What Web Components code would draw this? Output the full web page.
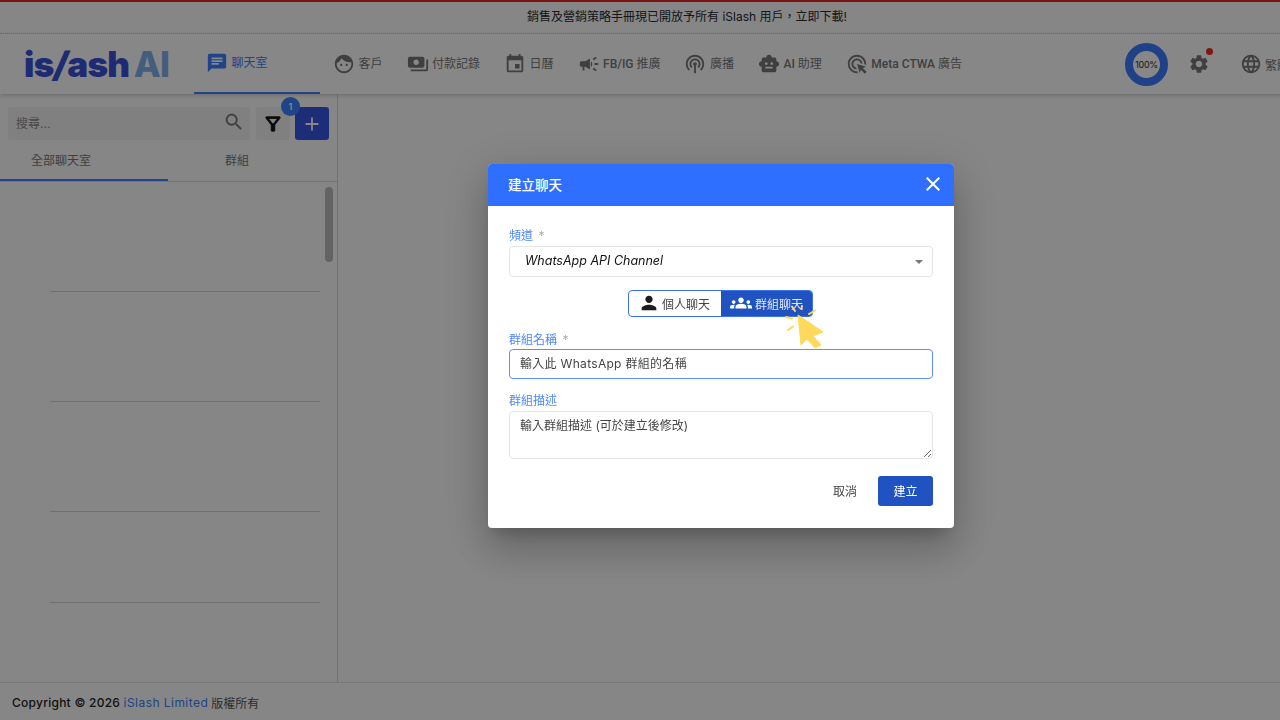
<!DOCTYPE html>
<html lang="zh-Hant">
<head>
<meta charset="utf-8">
<title>iSlash AI</title>
<style>
  html, body { margin: 0; height: 720px; overflow: hidden; background: #fff; }
  body { font-family: Inter, "Noto Sans CJK TC", sans-serif; font-size: 12px; color: #333; }
</style>
</head>
<body>
<app-shell>
  <promo-bar>銷售及營銷策略手冊現已開放予所有 iSlash 用戶，立即下載!</promo-bar>
  <nav-bar>
    <nav-item icon="chat" active>聊天室</nav-item>
    <nav-item icon="face">客戶</nav-item>
    <nav-item icon="payments">付款記錄</nav-item>
    <nav-item icon="event">日曆</nav-item>
    <nav-item icon="campaign"><b>FB/IG</b> 推廣</nav-item>
    <nav-item icon="podcasts">廣播</nav-item>
    <nav-item icon="toy"><b>AI</b> 助理</nav-item>
    <nav-item icon="ads"><b>Meta CTWA</b> 廣告</nav-item>
  </nav-bar>
  <chat-sidebar></chat-sidebar>
  <site-footer></site-footer>
</app-shell>
<create-chat-dialog></create-chat-dialog>

<script>
'use strict';

const ICONS = {
  chat: 'M20 2H4c-1.1 0-1.99.9-1.99 2L2 22l4-4h14c1.1 0 2-.9 2-2V4c0-1.1-.9-2-2-2zM6 9h12v2H6V9zm8 5H6v-2h8v2zm4-6H6V6h12v2z',
  face: 'M9 11.75c-.69 0-1.25.56-1.25 1.25s.56 1.25 1.25 1.25 1.25-.56 1.25-1.25-.56-1.25-1.25-1.25zm6 0c-.69 0-1.25.56-1.25 1.25s.56 1.25 1.25 1.25 1.25-.56 1.25-1.25-.56-1.25-1.25-1.25zM12 2C6.48 2 2 6.48 2 12s4.48 10 10 10 10-4.48 10-10S17.52 2 12 2zm0 18c-4.41 0-8-3.59-8-8 0-.29.02-.58.05-.86 2.36-1.05 4.23-2.98 5.21-5.37C11.07 8.33 14.05 10 17.42 10c.78 0 1.53-.09 2.25-.26.21.71.33 1.47.33 2.26 0 4.41-3.59 8-8 8z',
  payments: 'M19 14V6c0-1.1-.9-2-2-2H3c-1.1 0-2 .9-2 2v8c0 1.1.9 2 2 2h14c1.1 0 2-.9 2-2zm-9-1c-1.66 0-3-1.34-3-3s1.34-3 3-3 3 1.34 3 3-1.34 3-3 3zm13-6v11c0 1.1-.9 2-2 2H4v-2h17V7h2z',
  event: 'M17 12h-5v5h5v-5zM16 1v2H8V1H6v2H5c-1.11 0-1.99.9-1.99 2L3 19c0 1.1.89 2 2 2h14c1.1 0 2-.9 2-2V5c0-1.1-.9-2-2-2h-1V1h-2zm3 18H5V8h14v11z',
  campaign: 'M18 11v2h4v-2h-4zm-2 6.61c.96.71 2.21 1.65 3.2 2.39.4-.53.8-1.07 1.2-1.6-.99-.74-2.24-1.68-3.2-2.4-.4.54-.8 1.08-1.2 1.61zM20.4 5.6c-.4-.53-.8-1.07-1.2-1.6-.99.74-2.24 1.68-3.2 2.4.4.53.8 1.07 1.2 1.6.96-.72 2.21-1.65 3.2-2.4zM4 9c-1.1 0-2 .9-2 2v2c0 1.1.9 2 2 2h1v4h2v-4h1l5 3V6L8 9H4zm11.5 3c0-1.33-.58-2.53-1.5-3.35v6.69c.92-.81 1.5-2.01 1.5-3.34z',
  podcasts: 'M14 12c0 .74-.4 1.38-1 1.72V22h-2v-8.28c-.6-.35-1-.98-1-1.72 0-1.1.9-2 2-2s2 .9 2 2zm-2-6c-3.31 0-6 2.69-6 6 0 1.74.75 3.31 1.94 4.4l1.42-1.42C8.53 14.25 8 13.19 8 12c0-2.21 1.79-4 4-4s4 1.79 4 4c0 1.19-.53 2.25-1.36 2.98l1.42 1.42C17.25 15.31 18 13.74 18 12c0-3.31-2.69-6-6-6zm0-4C6.48 2 2 6.48 2 12c0 2.85 1.2 5.41 3.11 7.24l1.42-1.42C4.98 16.36 4 14.29 4 12c0-4.41 3.59-8 8-8s8 3.59 8 8c0 2.29-.98 4.36-2.53 5.82l1.42 1.42C20.8 17.41 22 14.85 22 12c0-5.52-4.48-10-10-10z',
  toy: 'M20 9V7c0-1.1-.9-2-2-2h-3c0-1.66-1.34-3-3-3S9 3.34 9 5H6c-1.1 0-2 .9-2 2v2c-1.66 0-3 1.34-3 3s1.34 3 3 3v4c0 1.1.9 2 2 2h12c1.1 0 2-.9 2-2v-4c1.66 0 3-1.34 3-3s-1.34-3-3-3zM7.5 11.5c0-.83.67-1.5 1.5-1.5s1.5.67 1.5 1.5S9.83 13 9 13s-1.5-.67-1.5-1.5zM16 17H8v-2h8v2zm-1-4c-.83 0-1.5-.67-1.5-1.5S14.17 10 15 10s1.5.67 1.5 1.5S15.83 13 15 13z',
  ads: 'M11.71 17.99C8.53 17.84 6 15.22 6 12c0-3.31 2.69-6 6-6 3.22 0 5.84 2.53 5.99 5.71l-2.1-.63C15.48 9.31 13.89 8 12 8c-2.21 0-4 1.79-4 4 0 1.89 1.31 3.48 3.08 3.89l.63 2.1zM22 12c0 .3-.01.6-.04.9l-1.97-.59c.01-.1.01-.21.01-.31 0-4.42-3.58-8-8-8s-8 3.58-8 8 3.58 8 8 8c.1 0 .21 0 .31-.01l.59 1.97c-.3.03-.6.04-.9.04-5.52 0-10-4.48-10-10S6.48 2 12 2s10 4.48 10 10zm-3.77 4.26L22 15l-10-3 3 10 1.26-3.77 4.27 4.27 1.98-1.98-4.28-4.26z',
  settings: 'M19.14 12.94c.04-.3.06-.61.06-.94 0-.32-.02-.64-.07-.94l2.03-1.58c.18-.14.23-.41.12-.61l-1.92-3.32c-.12-.22-.37-.29-.59-.22l-2.39.96c-.5-.38-1.03-.7-1.62-.94l-.36-2.54c-.04-.24-.24-.41-.48-.41h-3.84c-.24 0-.43.17-.47.41l-.36 2.54c-.59.24-1.13.57-1.62.94l-2.39-.96c-.22-.08-.47 0-.59.22L2.74 8.87c-.12.21-.08.47.12.61l2.03 1.58c-.05.3-.09.63-.09.94s.02.64.07.94l-2.03 1.58c-.18.14-.23.41-.12.61l1.92 3.32c.12.22.37.29.59.22l2.39-.96c.5.38 1.03.7 1.62.94l.36 2.54c.05.24.24.41.48.41h3.84c.24 0 .44-.17.47-.41l.36-2.54c.59-.24 1.13-.56 1.62-.94l2.39.96c.22.08.47 0 .59-.22l1.92-3.32c.12-.22.07-.47-.12-.61l-2.01-1.58zM12 15.6c-1.98 0-3.6-1.62-3.6-3.6s1.62-3.6 3.6-3.6 3.6 1.62 3.6 3.6-1.62 3.6-3.6 3.6z',
  language: 'M11.99 2C6.47 2 2 6.48 2 12s4.47 10 9.99 10C17.52 22 22 17.52 22 12S17.52 2 11.99 2zm6.93 6h-2.95c-.32-1.25-.78-2.45-1.38-3.56 1.84.63 3.37 1.91 4.33 3.56zM12 4.04c.83 1.2 1.48 2.53 1.91 3.96h-3.82c.43-1.43 1.08-2.76 1.91-3.96zM4.26 14C4.1 13.36 4 12.69 4 12s.1-1.36.26-2h3.38c-.08.66-.14 1.32-.14 2 0 .68.06 1.34.14 2H4.26zm.82 2h2.95c.32 1.25.78 2.45 1.38 3.56-1.84-.63-3.37-1.9-4.33-3.56zm2.95-8H5.08c.96-1.66 2.49-2.93 4.33-3.56C8.81 5.55 8.35 6.75 8.03 8zM12 19.96c-.83-1.2-1.48-2.53-1.91-3.96h3.82c-.43 1.43-1.08 2.76-1.91 3.96zM14.34 14H9.66c-.09-.66-.16-1.32-.16-2 0-.68.07-1.35.16-2h4.68c.09.65.16 1.32.16 2 0 .68-.07 1.34-.16 2zm.25 5.56c.6-1.11 1.06-2.31 1.38-3.56h2.95c-.96 1.65-2.49 2.93-4.33 3.56zM16.36 14c.08-.66.14-1.32.14-2 0-.68-.06-1.34-.14-2h3.38c.16.64.26 1.31.26 2s-.1 1.36-.26 2h-3.38z',
  search: 'M15.5 14h-.79l-.28-.27C15.41 12.59 16 11.11 16 9.5 16 5.91 13.09 3 9.5 3S3 5.91 3 9.5 5.91 16 9.5 16c1.61 0 3.09-.59 4.23-1.57l.27.28v.79l5 4.99L20.49 19l-4.99-5zm-6 0C7.01 14 5 11.99 5 9.5S7.01 5 9.5 5 14 7.01 14 9.5 11.99 14 9.5 14z',
  filter: 'M7 6h10l-5.01 6.3L7 6zm-2.75-.39C6.27 8.2 10 13 10 13v6c0 .55.45 1 1 1h2c.55 0 1-.45 1-1v-6s3.72-4.8 5.74-7.39c.51-.66.04-1.61-.79-1.61H5.04c-.83 0-1.3.95-.79 1.61z',
  add: 'M19 13h-6v6h-2v-6H5v-2h6V5h2v6h6v2z',
  person: 'M12 12c2.21 0 4-1.79 4-4s-1.79-4-4-4-4 1.79-4 4 1.79 4 4 4zm0 2c-2.67 0-8 1.34-8 4v2h16v-2c0-2.66-5.33-4-8-4z',
  groups: 'M12 12.75c1.63 0 3.07.39 4.24.9 1.08.48 1.76 1.56 1.76 2.73V18H6v-1.61c0-1.18.68-2.26 1.76-2.73 1.17-.52 2.61-.91 4.24-.91zM4 13c1.1 0 2-.9 2-2s-.9-2-2-2-2 .9-2 2 .9 2 2 2zm1.13 1.1C4.76 14.04 4.39 14 4 14c-.99 0-1.93.21-2.78.58C.48 14.9 0 15.62 0 16.43V18h4.5v-1.61c0-.83.23-1.61.63-2.29zM20 13c1.1 0 2-.9 2-2s-.9-2-2-2-2 .9-2 2 .9 2 2 2zm4 3.43c0-.81-.48-1.53-1.22-1.85-.85-.37-1.79-.58-2.78-.58-.39 0-.76.04-1.13.1.4.68.63 1.46.63 2.29V18H24v-1.57zM12 6c1.66 0 3 1.34 3 3s-1.34 3-3 3-3-1.34-3-3 1.34-3 3-3z',
  close: 'M19 6.41 17.59 5 12 10.59 6.41 5 5 6.41 10.59 12 5 17.59 6.41 19 12 13.41 17.59 19 19 17.59 13.41 12z'
};

const icon = (name, size, fill = 'currentColor') =>
  `<svg width="${size}" height="${size}" viewBox="0 0 24 24" fill="${fill}" style="display:block;flex:none"><path d="${ICONS[name]}"/></svg>`;

// small helper so each element only has to hand over its markup
class ShadowElement extends HTMLElement {
  constructor(html) {
    super();
    this.attachShadow({mode: 'open'}).innerHTML = html;
  }
}

customElements.define('app-shell', class extends ShadowElement {
  constructor() {
    super(`<style>
      :host { display: flex; flex-direction: column; width: 1442px; height: 720px; background: #fdfdfd; }
    </style><slot></slot>`);
  }
});

customElements.define('promo-bar', class extends ShadowElement {
  constructor() {
    super(`<style>
      :host {
        display: flex; justify-content: center; align-items: center;
        box-sizing: border-box; height: 34px; padding: 0 68px 4px 0;
        border-top: 2px solid #e8261f; border-bottom: 1px dotted #d0d0d0;
        color: #2a2a2a; font-size: 12px; background: #fdfdfd;
      }
    </style><slot></slot>`);
  }
});

customElements.define('nav-item', class extends ShadowElement {
  constructor() {
    super(`<style>
      :host {
        display: flex; align-items: center; gap: 3.500px; height: 60px; box-sizing: border-box;
        color: #777; font: 400 12px Roboto, "Noto Sans CJK TC", sans-serif;
      }
      :host([active]) {
        width: 126px; padding-left: 12px; margin-right: -11px;
        color: #3c80ff; border-bottom: 2px solid #3c80ff;
      }
      .t { white-space: pre; margin-bottom: 3px; }
      ::slotted(b) { font-weight: 500; }
    </style><span id="i"></span><span class="t"><slot></slot></span>`);
  }
  connectedCallback() {
    const i = this.shadowRoot.querySelector('#i');
    i.innerHTML = icon(this.getAttribute('icon'), 22);
  }
});

customElements.define('nav-bar', class extends ShadowElement {
  constructor() {
    super(`<style>
      :host {
        display: flex; align-items: center; gap: 24px; flex: none; position: relative; z-index: 1;
        height: 60px; padding-left: 24px; background: #fff;
        box-shadow: 0 1px 4px rgba(0,0,0,.22);
      }
      .logo {
        width: 146px; white-space: nowrap; font: 900 35px/60px Inter, sans-serif;
        letter-spacing: -.7px; color: #3a50d8;
      }
      .logo b { font-style: italic; font-weight: 900; }
      .logo i { font-style: normal; font-weight: 800; color: #80b0f0; margin-left: -2px; }
      .right { display: flex; align-items: center; margin-left: 139px; color: #777; }
      .ring {
        box-sizing: border-box; width: 43px; height: 43px; border-radius: 50%;
        border: 8px solid #3a7cff; display: flex; align-items: center; justify-content: center;
        color: #333; font-size: 9px; letter-spacing: -.3px;
      }
      .gear { position: relative; margin-left: 20px; }
      .dot { position: absolute; right: -3px; top: -5px; width: 7px; height: 7px; border-radius: 50%; background: #f02a20; }
      .lang { display: flex; align-items: center; gap: 3px; margin-left: 30px; font-size: 12px; }
    </style>
    <div class="logo">is<b>/</b>ash <i>AI</i></div>
    <slot></slot>
    <div class="right">
      <div class="ring">100%</div>
      <div class="gear">${icon('settings', 22)}<span class="dot"></span></div>
      <div class="lang">${icon('language', 22)}繁體中文</div>
    </div>`);
  }
});

customElements.define('chat-sidebar', class extends ShadowElement {
  constructor() {
    super(`<style>
      :host {
        display: flex; flex-direction: column; flex: 1; min-height: 0; box-sizing: border-box;
        width: 338px; border-right: 1px solid #d6d6d6; background: #fdfdfd; color: #777;
      }
      .tools { display: flex; height: 46px; padding: 13px 0 0 8px; box-sizing: border-box; flex: none; }
      .search {
        box-sizing: border-box; width: 242px; height: 33px; background: #f2f2f2; border-radius: 3px;
        display: flex; align-items: center; justify-content: space-between; padding: 0 5px 3px 8px; color: #8a8a8a;
      }
      .search svg { color: #777; }
      .filter {
        position: relative; width: 34px; height: 33px; margin-left: 6px; background: #f2f2f2; border-radius: 3px;
        display: flex; align-items: center; justify-content: center; color: #111;
      }
      .filter svg path { stroke: #111; stroke-width: .8; }
      .badge {
        position: absolute; left: 25px; top: -10px; width: 19px; height: 19px; border-radius: 50%;
        background: #3c80ff; color: #fff; font-size: 9px; font-weight: 600;
        display: flex; align-items: center; justify-content: center; z-index: 1;
      }
      .add {
        width: 34px; height: 33px; margin-left: 5px; border-radius: 3px; background: #3a55e0; color: #fff;
        display: flex; align-items: center; justify-content: center;
      }
      .tabs { display: flex; height: 41px; flex: none; border-bottom: 1px solid #dcdcdc; box-sizing: content-box; }
      .tab { box-sizing: border-box; height: 41px; line-height: 41px; font-size: 12px; color: #777; }
      .tab.on { width: 168px; padding-left: 31px; border-bottom: 2px solid #3c80ff; }
      .tab.off { padding-left: 57px; }
      .scroll { display: flex; flex: 1; min-height: 0; }
      .rows { flex: 1; margin-left: 50px; }
      .row { border-bottom: 1px solid #d2d2d2; box-sizing: border-box; }
      .thumb { width: 8px; height: 75px; margin: 5px 4px 0 5px; border-radius: 4px; background: #bcbcbc; flex: none; }
    </style>
    <div class="tools">
      <div class="search">搜尋...${icon('search', 22)}</div>
      <div class="filter"><span class="badge">1</span>${icon('filter', 22)}</div>
      <div class="add">${icon('add', 22)}</div>
    </div>
    <div class="tabs">
      <div class="tab on">全部聊天室</div>
      <div class="tab off">群組</div>
    </div>
    <div class="scroll">
      <div class="rows">
        <div class="row" style="height:110px"></div>
        <div class="row" style="height:110px"></div>
        <div class="row" style="height:110px"></div>
        <div class="row" style="height:91px"></div>
      </div>
      <div class="thumb"></div>
    </div>`);
  }
});

customElements.define('site-footer', class extends ShadowElement {
  constructor() {
    super(`<style>
      :host {
        display: flex; align-items: center; flex: none; height: 38px; box-sizing: border-box;
        padding: 2px 0 0 12px; border-top: 1px solid #e2e2e2; background: #fdfdfd;
        font-size: 12px; font-weight: 500; color: #222; letter-spacing: .25px; white-space: pre;
      }
      a { color: #3c80ff; font-weight: 400; letter-spacing: .45px; }
      span { font-weight: 400; color: #555; letter-spacing: 0; margin-left: 3px; }
    </style>Copyright © 2026 <a>iSlash Limited</a><span>版權所有</span>`);
  }
});

customElements.define('form-field', class extends ShadowElement {
  constructor() {
    super(`<style>
      :host { display: block; }
      .l { display: block; height: 16px; line-height: 16px; margin-bottom: 1px; font-size: 12px; color: #4c86ff; }
      .s { color: #aaa; margin-left: 2px; }
    </style><div class="l"><span id="t"></span><span class="s" id="m"></span></div><slot></slot>`);
  }
  connectedCallback() {
    this.shadowRoot.querySelector('#t').textContent = this.getAttribute('label');
    if (this.hasAttribute('required')) this.shadowRoot.querySelector('#m').textContent = ' *';
  }
});

customElements.define('chat-type-toggle', class extends ShadowElement {
  constructor() {
    super(`<style>
      :host {
        display: flex; position: relative; width: 185px; height: 27px; box-sizing: border-box;
        border: 1px solid #3f74e8; border-radius: 4px; font-size: 12px;
      }
      div { display: flex; align-items: center; box-sizing: border-box; padding-bottom: 1px; }
      .a { width: 92px; padding-left: 9px; gap: 2px; color: #444; }
      .b { flex: 1; padding-left: 9px; gap: 3px; background: #2052c2; color: #dfe8ff; border-radius: 0 3px 3px 0; }
      svg.cursor { position: absolute; left: 151px; top: 9px; overflow: visible; }
    </style>
    <div class="a">${icon('person', 22, '#1c1c1c')}個人聊天</div>
    <div class="b">${icon('groups', 22, '#fff')}群組聊天</div>
    <svg class="cursor" width="50" height="50" viewBox="780 299 50 50">
      <polygon points="798,314 823,331 813,335 821,344 815,347 807,338 801,344" fill="#ffd95a" stroke="#ffd95a" stroke-width="1" stroke-linejoin="round"/>
      <g stroke="#ffd95a" stroke-width="2" stroke-linecap="round" fill="none">
        <path d="M786 316l6 1.5M788 329l5-3.5M792 305.500l3 4.500M802 305l-.5 3M809 313l6-3.500"/>
      </g>
    </svg>`);
  }
});

customElements.define('create-chat-dialog', class extends ShadowElement {
  constructor() {
    super(`<style>
      :host {
        position: fixed; left: 0; top: 0; width: 1442px; height: 720px; z-index: 10;
        display: flex; justify-content: center; align-items: flex-start;
        padding-top: 164px; box-sizing: border-box; background: rgba(0,0,0,.47);
        font-family: Inter, "Noto Sans CJK TC", sans-serif;
      }
      .dlg {
        width: 466px; height: 364px; background: #fff; border-radius: 4px; overflow: hidden; flex: none;
        box-shadow: 0 11px 15px -7px rgba(0,0,0,.2), 0 24px 38px 3px rgba(0,0,0,.14), 0 9px 46px 8px rgba(0,0,0,.12);
      }
      header {
        display: flex; align-items: center; justify-content: space-between; height: 42px; box-sizing: border-box;
        padding: 0 9px 2px 20px; background: #2f6fff; color: #fff; font-size: 13.500px; font-weight: 500;
      }
      main { padding: 22px 21px 0; display: flex; flex-direction: column; }
      .box {
        box-sizing: border-box; display: flex; align-items: center; width: 424px;
        border: 1px solid #e2e4e8; border-radius: 4px; color: #444; font-size: 12px;
      }
      .sel { height: 31px; margin-top: 2px; padding: 0 9px 3px 15px; justify-content: space-between; color: #111; font-size: 12.500px; font-style: italic; }
      .sel i { width: 0; height: 0; border: 4.500px solid transparent; border-top-color: #777; border-bottom: 0; margin-top: 3px; }
      chat-type-toggle { margin: 13px 0 15px 119px; }
      .in { height: 30px; padding: 0 0 3px 10px; border: 1.500px solid #5a8fff; letter-spacing: .3px; }
      textarea {
        display: block; box-sizing: border-box; width: 424px; height: 48px; margin: 2px 0 0; padding: 6px 10px;
        border: 1px solid #e2e4e8; border-radius: 4px; color: #444; outline: 0;
        font: 12px/16px Inter, "Noto Sans CJK TC", sans-serif; resize: both;
      }
      .group { margin-top: 14px; }
      footer { display: flex; justify-content: flex-end; align-items: center; margin-top: 17px; }
      .cancel { margin-right: 21px; margin-bottom: 2px; color: #444; font-size: 12px; }
      .ok {
        box-sizing: border-box; width: 55px; height: 30px; padding-bottom: 2px; border-radius: 3px;
        background: #2052c2; color: #fff; font-size: 12px;
        display: flex; align-items: center; justify-content: center;
      }
    </style>
    <div class="dlg">
      <header>建立聊天${icon('close', 24, '#fff')}</header>
      <main>
        <form-field label="頻道" required>
          <div class="box sel">WhatsApp API Channel<i></i></div>
        </form-field>
        <chat-type-toggle></chat-type-toggle>
        <form-field label="群組名稱" required>
          <div class="box in">輸入此 WhatsApp 群組的名稱</div>
        </form-field>
        <form-field class="group" label="群組描述">
          <textarea>輸入群組描述 (可於建立後修改)</textarea>
        </form-field>
        <footer><span class="cancel">取消</span><span class="ok">建立</span></footer>
      </main>
    </div>`);
  }
});
</script>
</body>
</html>
